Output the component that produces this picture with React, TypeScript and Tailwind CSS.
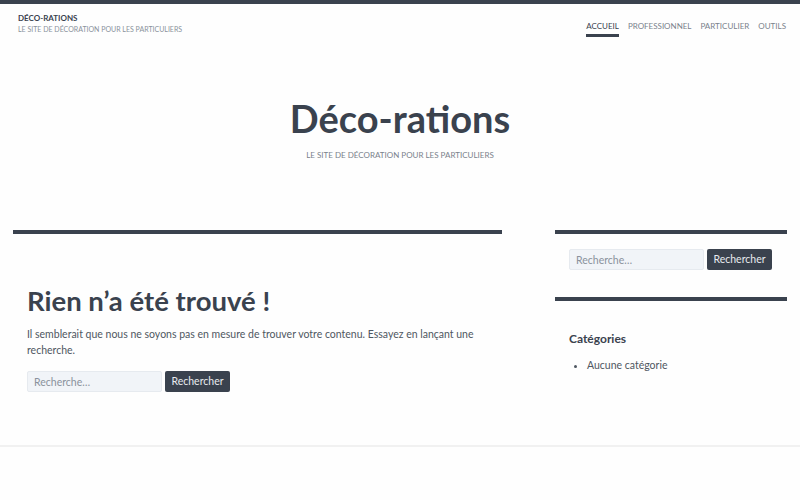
const font = { fontFamily: "Lato, 'Noto Sans', sans-serif" };

const SearchForm = () => (
  <form className="flex items-center gap-[3px]" onSubmit={e => e.preventDefault()}>
    <input
      type="search"
      placeholder="Recherche…"
      className="w-[135px] h-[21px] px-[6px] text-[10.5px] bg-[#f1f4f8] border border-[#e6eaef] rounded-[2px] text-[#3a424e] placeholder:text-[#8a929c] outline-none"
    />
    <button className="h-[21px] w-[65px] text-[10.5px] bg-[#3a424e] text-[#e8ebef] rounded-[2px]">
      Rechercher
    </button>
  </form>
);

const App = () => {
  const links = ["ACCUEIL", "PROFESSIONNEL", "PARTICULIER", "OUTILS"];

  return (
    <div className="min-h-[500px] bg-[#fefefe] text-[#3a424e]" style={font}>
      <div className="h-[4px] bg-[#3a424e]" />

      <header className="flex justify-between items-start pl-[18px] pr-[14px] pt-[9px]">
        <div>
          <div className="text-[8px] font-bold leading-[11px] text-[#3a424e]">DÉCO-RATIONS</div>
          <div className="text-[7px] leading-[10px] text-[#8a929c]">LE SITE DE DÉCORATION POUR LES PARTICULIERS</div>
        </div>
        <nav className="flex gap-[9px] pt-[8px] text-[8px] text-[#7a828c]">
          {links.map((l, i) => (
            <a
              key={l}
              className={`pb-[2px] leading-[11px] ${i === 0 ? "text-[#3a424e] border-b-[3px] border-[#3a424e]" : ""}`}
            >
              {l}
            </a>
          ))}
        </nav>
      </header>

      <div className="flex flex-col items-center pt-[58px] pb-[69px]">
        <h1 className="text-[38px] font-bold leading-[46px] text-[#3a424e]">Déco-rations</h1>
        <p className="mt-[8px] text-[8px] text-[#7a828c]">LE SITE DE DÉCORATION POUR LES PARTICULIERS</p>
      </div>

      <div className="flex pl-[13px] pr-[13px] gap-[53px]">
        <main className="w-[489px]">
          <div className="h-[4px] bg-[#3a424e]" />
          <div className="px-[14px] pt-[50px]">
            <h2 className="text-[27.5px] font-bold leading-[33px]">Rien n’a été trouvé !</h2>
            <p className="mt-[9px] text-[10.5px] leading-[16px] text-[#4f5761]">
              Il semblerait que nous ne soyons pas en mesure de trouver votre contenu. Essayez en lançant une recherche.
            </p>
            <div className="mt-[13px]">
              <SearchForm />
            </div>
          </div>
        </main>

        <aside className="w-[232px]">
          <div className="h-[4px] bg-[#3a424e]" />
          <div className="px-[14px] pt-[15px] pb-[27px]">
            <SearchForm />
          </div>
          <div className="h-[4px] bg-[#3a424e]" />
          <div className="px-[14px] pt-[30px]">
            <h3 className="text-[12px] font-bold leading-[16px]">Catégories</h3>
            <ul className="mt-[10px] list-disc pl-[18px] text-[10.5px] leading-[16px] text-[#4f5761]">
              <li>Aucune catégorie</li>
            </ul>
          </div>
        </aside>
      </div>

      <div className="mt-[53px] h-[2px] bg-[#f1f1f1]" />
    </div>
  );
};

export default App;
